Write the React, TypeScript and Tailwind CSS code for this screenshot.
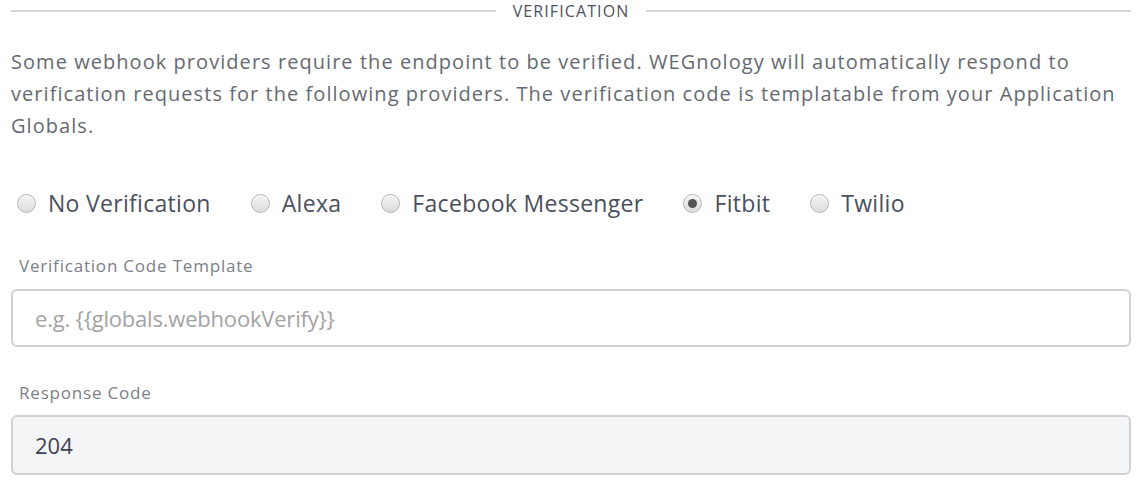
import React from "react";

const font = { fontFamily: '"Open Sans", "Noto Sans", sans-serif' };

function Radio({ label, checked }: { label: string; checked?: boolean }) {
  return (
    <label className="flex items-center gap-[12px]">
      <span className="flex h-[19px] w-[19px] items-center justify-center rounded-full border border-[#b4b4b4] bg-gradient-to-b from-[#f4f4f4] to-[#dcdcdc] shadow-[inset_0_1px_1px_rgba(255,255,255,0.8)]">
        {checked && <span className="h-[9px] w-[9px] rounded-full bg-[#555]" />}
      </span>
      <span className="text-[23px] leading-none tracking-[0.3px] text-[#4a505d]">{label}</span>
    </label>
  );
}

export default function App() {
  return (
    <div className="w-[1146px] h-[496px] bg-white pl-[11px] pr-[15px] overflow-hidden" style={font}>
      <div className="flex items-center h-[21px]">
        <div className="h-[2px] flex-1 bg-[#d6d6d6]" />
        <span className="px-[17px] text-[16px] leading-none text-[#4d5360] tracking-[1.1px]">VERIFICATION</span>
        <div className="h-[2px] flex-1 bg-[#d6d6d6]" />
      </div>
      <p className="mt-[25px] text-[20px] leading-[32px] tracking-[1.05px] text-[#666a70]">
        Some webhook providers require the endpoint to be verified. WEGnology will automatically respond to verification requests for the following providers. The verification code is templatable from your Application Globals.
      </p>
      <div className="mt-[50px] flex items-center gap-[40px] pl-[6px]">
        <Radio label="No Verification" />
        <Radio label="Alexa" />
        <Radio label="Facebook Messenger" />
        <Radio label="Fitbit" checked />
        <Radio label="Twilio" />
      </div>
      <div className="mt-[42px] pl-[8px] text-[17px] leading-none tracking-[0.8px] text-[#7b8089]">Verification Code Template</div>
      <div className="mt-[15px] flex h-[58px] items-center rounded-[6px] border-2 border-[#d2d2d2] bg-white px-[22px]">
        <span className="text-[22px] tracking-[-0.2px] text-[#a3a3a3]">e.g. {"{{globals.webhookVerify}}"}</span>
      </div>
      <div className="mt-[37px] pl-[8px] text-[17px] leading-none tracking-[0.8px] text-[#7b8089]">Response Code</div>
      <div className="mt-[14px] flex h-[60px] items-center rounded-[6px] border-2 border-[#d2d2d2] bg-[#f4f5f7] px-[22px]">
        <span className="text-[22px] text-[#3c4250]">204</span>
      </div>
    </div>
  );
}
